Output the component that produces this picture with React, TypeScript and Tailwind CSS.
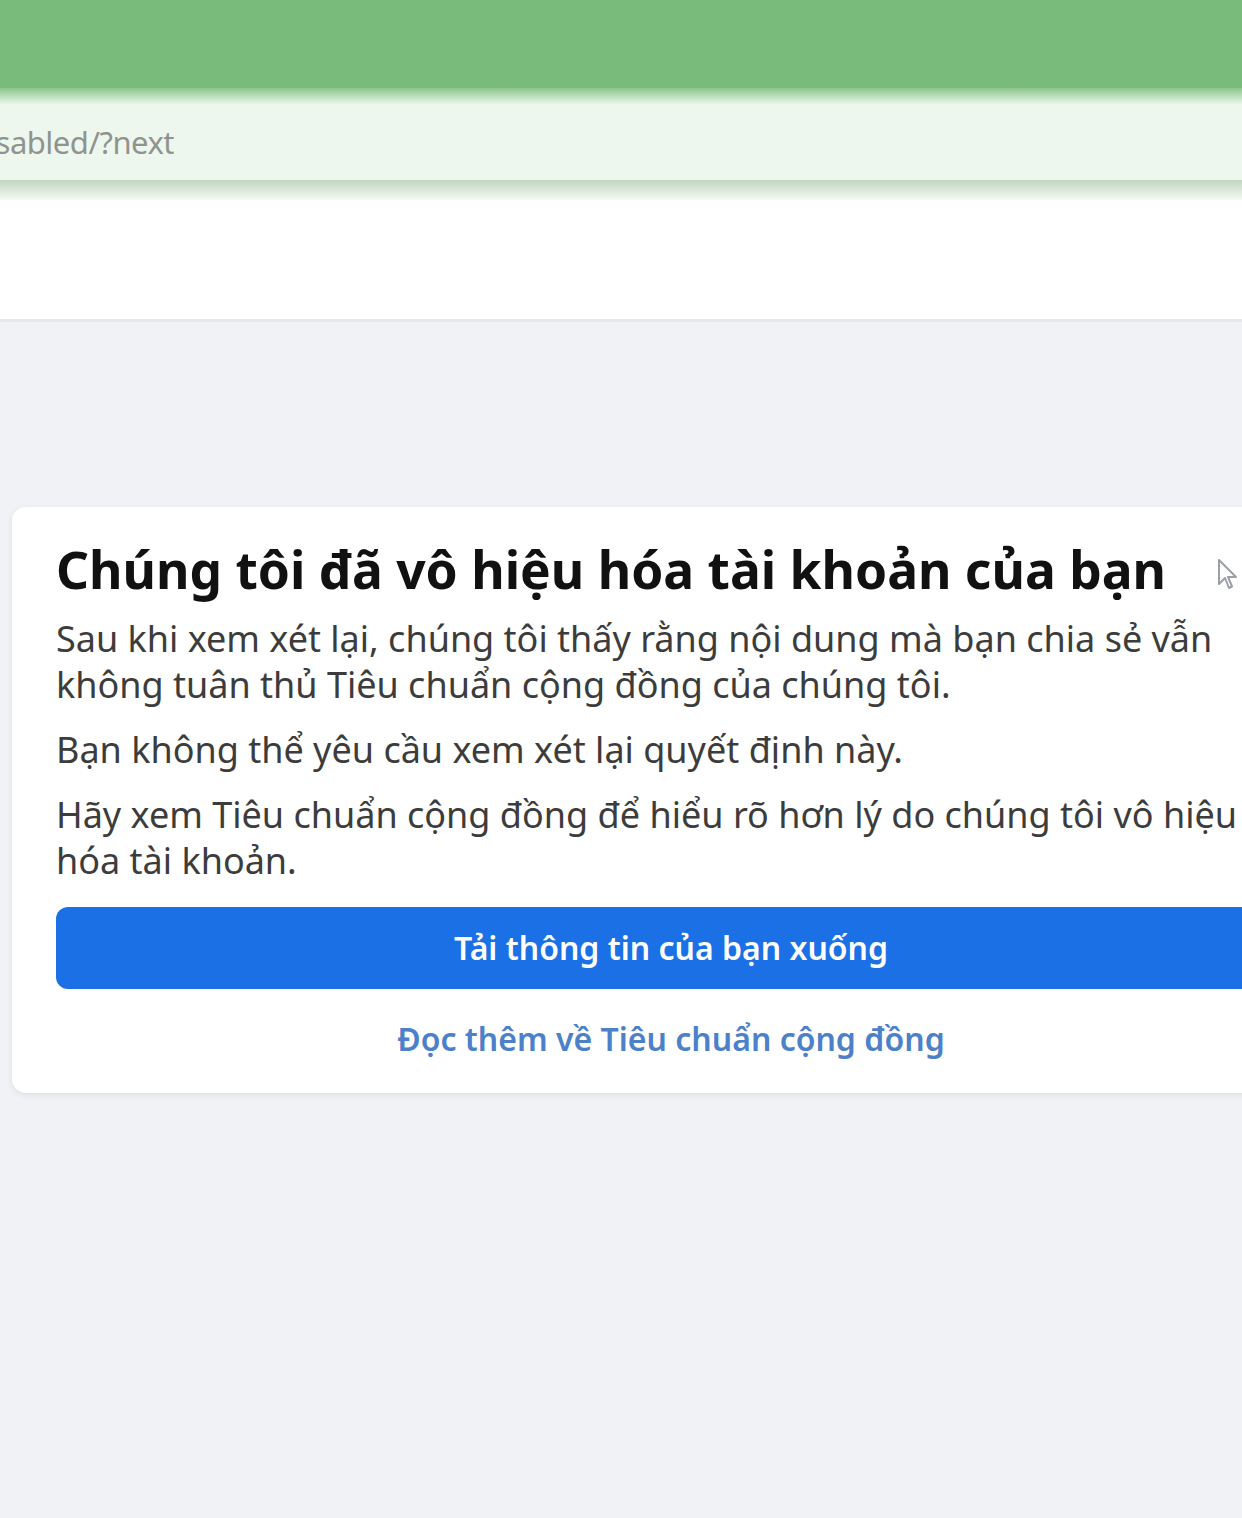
export default function App() {
  return (
    <div className="min-h-[1518px] w-[1242px] overflow-hidden bg-[#f0f2f5] font-['Noto_Sans',sans-serif]">
      {/* browser chrome */}
      <div className="h-[88px] bg-[#79bb7a]" />
      <div className="h-[17px] bg-gradient-to-b from-[#8cc68c] to-[#eef8ee]" />
      <div className="flex h-[75px] items-center bg-[#eef7ee]">
        <div className="flex w-[174px] justify-end overflow-hidden whitespace-nowrap text-[31px] tracking-[-0.5px] text-[#8f948f]">
          disabled/?next
        </div>
      </div>
      <div className="h-[20px] bg-gradient-to-b from-[#c0d6c0] to-[#f4faf4]" />

      {/* page header */}
      <div className="h-[122px] border-b-[3px] border-[#e6e8ec] bg-white" />

      {/* body */}
      <div className="pt-[185px]">
        <div className="ml-[12px] w-[1318px] rounded-[14px] bg-white px-[44px] pb-[31px] pt-[31px] shadow-[0_2px_6px_rgba(0,0,0,0.08)]">
          <div className="relative">
            <h1 className="text-[51.5px] font-bold leading-[62px] text-[#111]">
              Chúng tôi đã vô hiệu hóa tài khoản của bạn
            </h1>
            <svg
              className="absolute left-[1160px] top-[20px]"
              width="22"
              height="34"
              viewBox="0 0 22 34"
              fill="none"
            >
              <path
                d="M3 2 L3 26 L9 20 L13 30 L16 28.5 L12 19 L20 19 Z"
                fill="#fff"
                stroke="#9aa0a6"
                strokeWidth="2"
                strokeLinejoin="round"
              />
            </svg>
          </div>
          <div className="mt-[16px] space-y-[19px] text-[36px] leading-[46px] text-[#3c3c3c]">
            <p>
              Sau khi xem xét lại, chúng tôi thấy rằng nội dung mà bạn chia sẻ vẫn không tuân thủ Tiêu
              chuẩn cộng đồng của chúng tôi.
            </p>
            <p>Bạn không thể yêu cầu xem xét lại quyết định này.</p>
            <p>
              Hãy xem Tiêu chuẩn cộng đồng để hiểu rõ hơn lý do chúng tôi vô hiệu hóa tài khoản.
            </p>
          </div>
          <button className="mt-[23px] flex h-[82px] w-full items-center justify-center rounded-[12px] bg-[#1a70e4] text-[32px] font-semibold text-white">
            Tải thông tin của bạn xuống
          </button>
          <div className="mt-[27px] text-center text-[32px] font-semibold leading-[46px] text-[#4c80c8]">
            Đọc thêm về Tiêu chuẩn cộng đồng
          </div>
        </div>
      </div>
    </div>
  );
}
